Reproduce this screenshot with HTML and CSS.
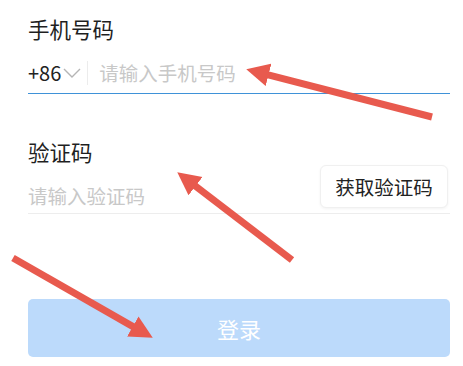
FILE: index.html
```html
<!DOCTYPE html>
<html lang="zh-CN">
<head>
<meta charset="utf-8">
<title>登录</title>
<link rel="stylesheet" href="styles.css">
</head>
<body>
<div class="page">
  <form class="form">
    <div class="label">手机号码</div>
    <div class="phone-row">
      <span class="code">+86</span>
      <svg class="chev" width="18" height="10" viewBox="0 0 18 10"><path d="M1 1 L9 9 L17 1" fill="none" stroke="#b5b5b5" stroke-width="1.4"/></svg>
      <span class="divider"></span>
      <span class="placeholder">请输入手机号码</span>
    </div>
    <div class="label label-2">验证码</div>
    <div class="code-row">
      <span class="placeholder code-ph">请输入验证码</span>
      <span class="get-code">获取验证码</span>
    </div>
    <div class="login">登录</div>
  </form>
  <svg class="arrows" width="463" height="366" viewBox="0 0 463 366">
    <defs>
      <marker id="head" viewBox="0 0 10 10" refX="1" refY="5" markerWidth="23" markerHeight="24" markerUnits="userSpaceOnUse" orient="auto">
        <path d="M0,0 L10,5 L0,10 z" fill="#e85a4e"/>
      </marker>
    </defs>
    <g stroke="#e85a4e" stroke-width="7" marker-end="url(#head)">
      <line x1="432" y1="117" x2="266.3" y2="74.3"/>
      <line x1="292" y1="260" x2="193.7" y2="184.8"/>
      <line x1="13" y1="258" x2="134.8" y2="327.6"/>
    </g>
  </svg>
</div>
</body>
</html>
```

FILE: styles.css
```css
html, body {
  margin: 0;
  padding: 0;
  background: #ffffff;
}
.page {
  position: relative;
  width: 463px;
  height: 366px;
  overflow: hidden;
  font-family: "Noto Sans CJK SC", "Noto Sans", sans-serif;
  color: #222222;
}
.form {
  margin: 0;
  padding: 14px 13px 0 28px;
  display: flex;
  flex-direction: column;
}
.label {
  font-size: 21.5px;
  line-height: 30px;
  color: #1f1f1f;
}
.label-2 {
  margin-top: 43px;
}
.phone-row {
  margin-top: 8px;
  height: 41px;
  display: flex;
  align-items: center;
  border-bottom: 1px solid #3f92d8;
}
.code {
  font-size: 20px;
  color: #222222;
  line-height: 24px;
}
.chev {
  margin-left: 2px;
  margin-top: 1px;
}
.divider {
  width: 1px;
  height: 24px;
  background: #ececec;
  margin-left: 6px;
  margin-right: 11px;
}
.placeholder {
  font-size: 19.5px;
  line-height: 26px;
  color: #c8c8c8;
}
.code-row {
  height: 46px;
  display: flex;
  align-items: flex-start;
  justify-content: space-between;
  border-bottom: 1px solid #ededed;
}
.code-ph {
  padding-top: 16px;
}
.get-code {
  margin-top: -2px;
  margin-right: 2px;
  width: 128px;
  height: 43px;
  box-sizing: border-box;
  display: flex;
  align-items: center;
  justify-content: center;
  font-size: 19.5px;
  color: #222222;
  background: #ffffff;
  border: 1px solid #f0f0f0;
  border-radius: 6px;
  box-shadow: 0 1px 3px rgba(0, 0, 0, 0.05);
}
.login {
  margin-top: 85px;
  height: 58px;
  border-radius: 5px;
  background: #bcdafb;
  color: #ffffff;
  font-size: 22px;
  display: flex;
  align-items: center;
  justify-content: center;
}
.arrows {
  position: absolute;
  left: 0;
  top: 0;
  pointer-events: none;
}
```
